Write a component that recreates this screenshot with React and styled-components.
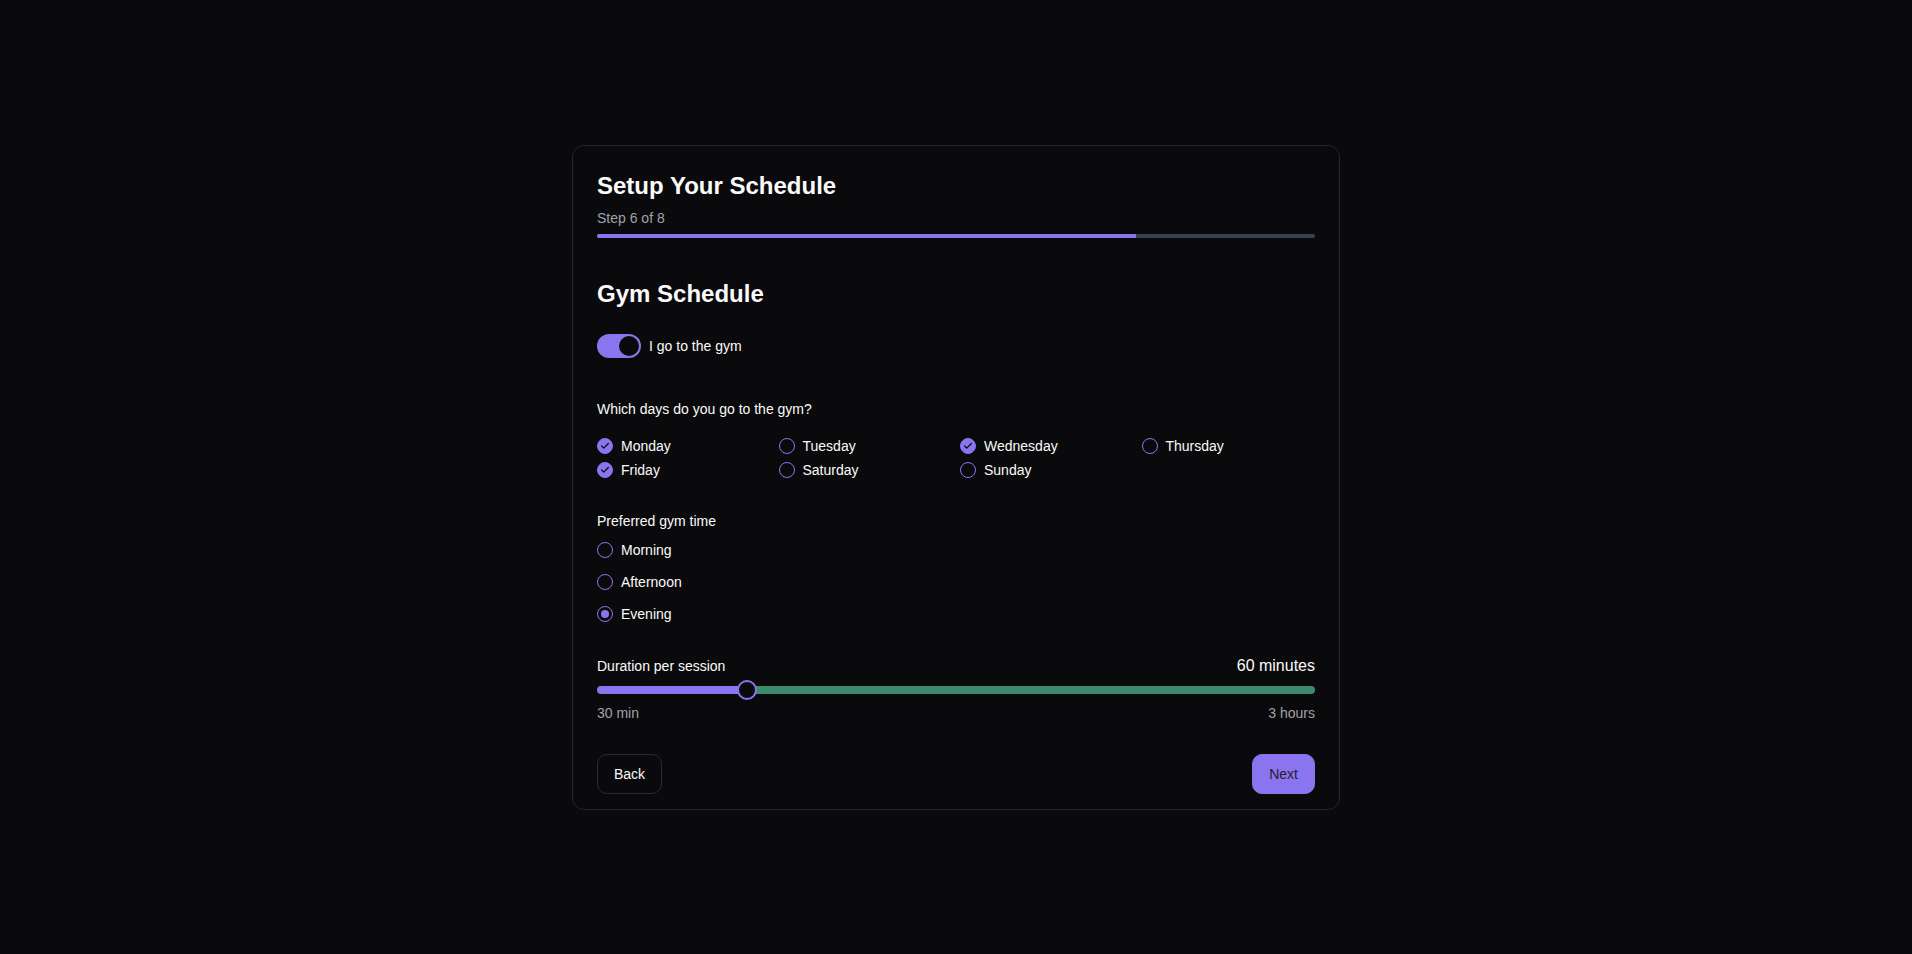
import React, { useState } from "react";
import styled, { createGlobalStyle } from "styled-components";

const purple = "#8b75ee";
const green = "#3c8b6f";
const bg = "#0a0a0c";

const GlobalStyle = createGlobalStyle`
  html, body {
    margin: 0;
    padding: 0;
    background: ${bg};
    font-family: "Liberation Sans", Arial, sans-serif;
    color: #fafafa;
  }
`;

const Page = styled.div`
  min-height: 954px;
  display: flex;
  align-items: center;
  justify-content: center;
`;

const Card = styled.div`
  width: 768px;
  box-sizing: border-box;
  border: 1px solid #26262b;
  border-radius: 12px;
  background: ${bg};
  padding: 24px 24px 15px;
  display: flex;
  flex-direction: column;
`;

const Title = styled.h1`
  margin: 0;
  font-size: 24px;
  line-height: 32px;
  font-weight: 700;
  color: #fafafa;
`;

const StepText = styled.div`
  margin-top: 6px;
  font-size: 14px;
  line-height: 20px;
  color: #a1a1aa;
`;

const Progress = styled.div`
  margin-top: 6px;
  height: 4px;
  border-radius: 2px;
  background: #374151;
  overflow: hidden;
`;

const ProgressFill = styled.div`
  height: 100%;
  background: ${purple};
`;

const SectionTitle = styled.h2`
  margin: 40px 0 0;
  font-size: 24px;
  line-height: 32px;
  font-weight: 700;
  color: #fafafa;
`;

const ToggleRow = styled.label`
  margin-top: 24px;
  display: flex;
  align-items: center;
  gap: 8px;
  font-size: 14px;
  cursor: pointer;
`;

const Switch = styled.button`
  width: 44px;
  height: 24px;
  border: none;
  border-radius: 12px;
  padding: 2px;
  background: ${(p) => (p.$on ? purple : "#374151")};
  display: flex;
  justify-content: ${(p) => (p.$on ? "flex-end" : "flex-start")};
  cursor: pointer;
  box-sizing: border-box;
`;

const Knob = styled.span`
  width: 20px;
  height: 20px;
  border-radius: 50%;
  background: ${bg};
`;

const Question = styled.div`
  margin-top: ${(p) => p.$mt}px;
  font-size: 14px;
  line-height: 20px;
  color: #fafafa;
`;

const DaysGrid = styled.div`
  margin-top: 17px;
  display: grid;
  grid-template-columns: repeat(4, 1fr);
  gap: 4px 8px;
`;

const Option = styled.label`
  display: flex;
  align-items: center;
  gap: 8px;
  height: 20px;
  font-size: 14px;
  color: #fafafa;
  cursor: pointer;
`;

const Box = styled.span`
  width: 16px;
  height: 16px;
  box-sizing: border-box;
  border-radius: 50%;
  border: 1px solid ${purple};
  background: ${(p) => (p.$checked ? purple : "transparent")};
  display: flex;
  align-items: center;
  justify-content: center;
  flex-shrink: 0;
`;

const RadioList = styled.div`
  margin-top: 9px;
  display: flex;
  flex-direction: column;
  gap: 12px;
`;

const Dot = styled.span`
  width: 8px;
  height: 8px;
  border-radius: 50%;
  background: ${purple};
`;

const DurationHead = styled.div`
  margin-top: 32px;
  display: flex;
  justify-content: space-between;
  align-items: flex-end;
  font-size: 14px;
  line-height: 20px;
`;

const Value = styled.span`
  font-size: 16px;
  line-height: 20px;
  color: #fafafa;
`;

const Slider = styled.div`
  position: relative;
  margin-top: 4px;
  height: 20px;
  display: flex;
  align-items: center;
`;

const Track = styled.div`
  width: 100%;
  height: 8px;
  border-radius: 4px;
  overflow: hidden;
  display: flex;
`;

const TrackPart = styled.div`
  height: 100%;
  background: ${(p) => p.$color};
`;

const Thumb = styled.span`
  position: absolute;
  top: 0;
  width: 20px;
  height: 20px;
  box-sizing: border-box;
  border-radius: 50%;
  border: 2px solid ${purple};
  background: ${bg};
`;

const Range = styled.div`
  margin-top: 3px;
  display: flex;
  justify-content: space-between;
  font-size: 14px;
  line-height: 20px;
  color: #a1a1aa;
`;

const Footer = styled.div`
  margin-top: 31px;
  display: flex;
  justify-content: space-between;
`;

const Button = styled.button`
  height: 40px;
  padding: 0 16px;
  box-sizing: border-box;
  border-radius: 10px;
  font-family: "Liberation Sans", Arial, sans-serif;
  font-size: 14px;
  cursor: pointer;
  border: 1px solid ${(p) => (p.$primary ? purple : "#2a2a30")};
  background: ${(p) => (p.$primary ? purple : bg)};
  color: ${(p) => (p.$primary ? "#231f33" : "#fafafa")};
`;

const Check = () => (
  <svg width="10" height="10" viewBox="0 0 24 24" fill="none" stroke={bg} strokeWidth="3" strokeLinecap="round" strokeLinejoin="round">
    <path d="M20 6 9 17l-5-5" />
  </svg>
);

const days = ["Monday", "Tuesday", "Wednesday", "Thursday", "Friday", "Saturday", "Sunday"];
const times = ["Morning", "Afternoon", "Evening"];

export default function App() {
  const [gym, setGym] = useState(true);
  const [picked, setPicked] = useState(["Monday", "Wednesday", "Friday"]);
  const [time, setTime] = useState("Evening");
  const minutes = 60;
  const pct = (minutes - 30) / 150;

  const toggleDay = (d) =>
    setPicked((cur) => (cur.includes(d) ? cur.filter((x) => x !== d) : [...cur, d]));

  return (
    <Page>
      <GlobalStyle />
      <Card>
        <Title>Setup Your Schedule</Title>
        <StepText>Step 6 of 8</StepText>
        <Progress>
          <ProgressFill style={{ width: `${(6 / 8) * 100}%` }} />
        </Progress>

        <SectionTitle>Gym Schedule</SectionTitle>
        <ToggleRow>
          <Switch $on={gym} onClick={() => setGym(!gym)}>
            <Knob />
          </Switch>
          I go to the gym
        </ToggleRow>

        <Question $mt={41}>Which days do you go to the gym?</Question>
        <DaysGrid>
          {days.map((d) => (
            <Option key={d} onClick={() => toggleDay(d)}>
              <Box $checked={picked.includes(d)}>{picked.includes(d) && <Check />}</Box>
              {d}
            </Option>
          ))}
        </DaysGrid>

        <Question $mt={31}>Preferred gym time</Question>
        <RadioList>
          {times.map((t) => (
            <Option key={t} onClick={() => setTime(t)}>
              <Box>{time === t && <Dot />}</Box>
              {t}
            </Option>
          ))}
        </RadioList>

        <DurationHead>
          <span>Duration per session</span>
          <Value>{minutes} minutes</Value>
        </DurationHead>
        <Slider>
          <Track>
            <TrackPart $color={purple} style={{ width: `calc(10px + ${pct} * (100% - 20px))` }} />
            <TrackPart $color={green} style={{ flex: 1 }} />
          </Track>
          <Thumb style={{ left: `calc(${pct} * (100% - 20px))` }} />
        </Slider>
        <Range>
          <span>30 min</span>
          <span>3 hours</span>
        </Range>

        <Footer>
          <Button>Back</Button>
          <Button $primary>Next</Button>
        </Footer>
      </Card>
    </Page>
  );
}
